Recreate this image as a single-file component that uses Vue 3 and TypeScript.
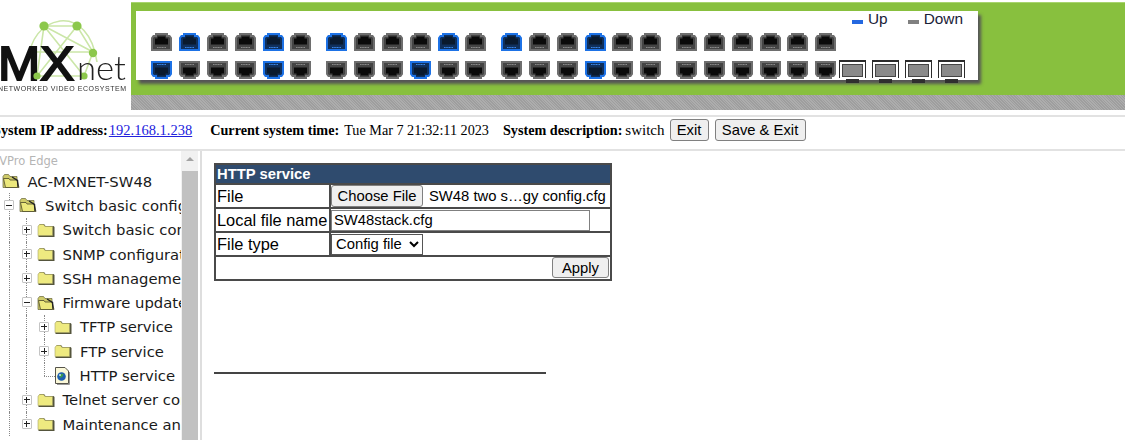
<script setup lang="ts">
type Cell = 'none' | 'line' | 'plus' | 'plus-end' | 'minus' | 'elbow'
type TreeRow = { label: string; cells: Cell[]; icon: 'open' | 'closed' | 'page' }

// which ports are up, by group
const topUp = [[1, 4], [0, 4], [0, 3], []]
const bottomUp = [[0, 4], [3], [3], []]

const groups = [0, 1, 2, 3].map((g) => ({
  top: [0, 1, 2, 3, 4, 5].map((i) => topUp[g].includes(i)),
  bottom: [0, 1, 2, 3, 4, 5].map((i) => bottomUp[g].includes(i)),
}))

const rows: TreeRow[] = [
  { label: 'AC-MXNET-SW48', cells: [], icon: 'open' },
  { label: 'Switch basic configuration', cells: ['minus'], icon: 'open' },
  { label: 'Switch basic config', cells: ['line', 'plus'], icon: 'closed' },
  { label: 'SNMP configuration', cells: ['line', 'plus'], icon: 'closed' },
  { label: 'SSH management', cells: ['line', 'plus'], icon: 'closed' },
  { label: 'Firmware update', cells: ['line', 'minus'], icon: 'open' },
  { label: 'TFTP service', cells: ['line', 'line', 'plus'], icon: 'closed' },
  { label: 'FTP service', cells: ['line', 'line', 'plus'], icon: 'closed' },
  { label: 'HTTP service', cells: ['line', 'line', 'elbow'], icon: 'page' },
  { label: 'Telnet server config', cells: ['line', 'plus'], icon: 'closed' },
  { label: 'Maintenance and', cells: ['line', 'plus-end'], icon: 'closed' },
]
</script>

<template>
  <div class="page">
    <header class="head">
      <div class="logo">
        <svg width="131" height="100" viewBox="0 0 131 100">
          <g stroke="#cbe6a8" stroke-width="1.6" fill="none">
            <path d="M28 62C30 38 42 24 60 21C78 19 93 34 97 62" />
            <path d="M44 26L77 26L93 52L84 76L37 76L44 26L93 52M77 26L37 76M44 26L84 76M28 52L93 52" />
          </g>
          <g fill="#8cc84b">
            <circle cx="44" cy="26" r="4.6" />
            <circle cx="77" cy="26" r="4.6" />
            <circle cx="93" cy="53" r="4.2" />
          </g>
          <text x="-2" y="80" class="logo-mx" textLength="76" lengthAdjust="spacingAndGlyphs">MX</text>
          <g fill="#8cc84b">
            <circle cx="37" cy="76" r="3.6" />
            <circle cx="84" cy="76" r="3.6" />
          </g>
          <text x="77" y="80" class="logo-net" textLength="49" lengthAdjust="spacingAndGlyphs">net</text>
          <text x="-2" y="91" class="logo-sub" textLength="128">NETWORKED VIDEO ECOSYSTEM</text>
        </svg>
      </div>
      <div class="banner">
        <div class="green">
          <div class="panel">
            <div class="legend">
              <span class="swatch up"></span><span class="legend-up">Up</span>
              <span class="swatch down"></span><span>Down</span>
            </div>
            <div class="port-row">
              <div v-for="(g, gi) in groups" :key="gi" class="port-group">
                <svg v-for="(up, i) in g.top" :key="i" class="port" :class="{ on: up }" viewBox="0 0 21 18">
                  <path class="rim" d="M5 1H16V3H18.5L20 5V17H1V5L2.5 3H5Z" />
                  <path class="well" d="M6.5 3.500H14.500V5.500H17V11.500H4V5.500H6.500Z" />
                  <path class="pins" d="M6 14.500H15" />
                </svg>
              </div>
            </div>
            <div class="port-row second">
              <div v-for="(g, gi) in groups" :key="gi" class="port-group">
                <svg v-for="(up, i) in g.bottom" :key="i" class="port flip" :class="{ on: up }" viewBox="0 0 21 18">
                  <path class="rim" d="M5 1H16V3H18.5L20 5V17H1V5L2.5 3H5Z" />
                  <path class="well" d="M6.5 3.500H14.500V5.500H17V11.500H4V5.500H6.500Z" />
                  <path class="pins" d="M6 14.500H15" />
                </svg>
              </div>
              <div class="sfp-group">
                <div v-for="n in 4" :key="n" class="sfp">
                  <span class="sfp-face"></span>
                  <span class="sfp-tab"></span>
                </div>
              </div>
            </div>
          </div>
        </div>
        <div class="hatch"></div>
      </div>
    </header>

    <div class="info">
      <b>System IP address:</b><a class="ip" href="#">192.168.1.238</a>
      <b class="gap-a">Current system time:</b><span class="val">Tue Mar 7 21:32:11 2023</span>
      <b class="gap-b">System description:</b><span class="val desc">switch</span>
      <button class="btn exit">Exit</button>
      <button class="btn save">Save &amp; Exit</button>
    </div>

    <main class="main">
      <aside class="side">
        <nav class="tree">
          <div class="tree-title">AVPro Edge</div>
          <div v-for="row in rows" :key="row.label" class="tree-row">
            <span v-for="(c, ci) in row.cells" :key="ci" class="cell" :class="c">
              <span v-if="c === 'plus' || c === 'plus-end' || c === 'minus'" class="box"></span>
            </span>
            <svg v-if="row.icon === 'closed'" class="ico" width="18" height="16" viewBox="0 0 18 16">
              <path d="M1.500 4L3 2H7L8.500 4H16.500L17.500 5V15H1.500Z" fill="#55553c" />
              <path d="M1 4.500L2.500 2.500H6.500L8 4.500H15.500V13.500H1Z" fill="#eeea80" stroke="#a8a566" stroke-width=".6" />
            </svg>
            <svg v-else-if="row.icon === 'open'" class="ico" width="18" height="16" viewBox="0 0 18 16">
              <path d="M1 3.500L2.500 1.500H6.500L8 3.500H15V14.500H1Z" fill="#cfcb6a" stroke="#66643a" stroke-width=".7" />
              <path d="M1.500 5.500H7L8 7H15L17 14.500H3.500Z" fill="#ece87c" stroke="#4a4828" stroke-width=".8" />
              <path d="M10 4L15.500 7.500L16 14" fill="none" stroke="#222" stroke-width="1.400" />
            </svg>
            <svg v-else class="ico page-ico" width="16" height="19" viewBox="0 0 16 19">
              <path d="M1.500 1.500H11L14.500 5V17.500H1.500Z" fill="#fbf8d8" stroke="#55534a" />
              <path d="M3 18.500H15.500V6" fill="none" stroke="#999" />
              <circle cx="7.500" cy="10.500" r="4.300" fill="#1f5fb0" />
              <path d="M5 9.500Q7 7 9.500 8L8.500 10.500L6.500 12Z" fill="#3d9b4a" />
              <circle cx="6" cy="9" r="1" fill="#c6e4f4" />
            </svg>
            <span class="tree-label">{{ row.label }}</span>
          </div>
        </nav>
        <div class="scroll">
          <div class="arrow"></div>
          <div class="thumb"></div>
        </div>
      </aside>

      <section class="content">
        <div class="form">
          <div class="title">HTTP service</div>
          <div class="lab">File</div>
          <div class="val-cell file-cell">
            <button class="btn choose">Choose File</button>
            <span class="file-name">SW48 two s…gy config.cfg</span>
          </div>
          <div class="lab">Local file name</div>
          <div class="val-cell">
            <input class="name-input" value="SW48stack.cfg" />
          </div>
          <div class="lab">File type</div>
          <div class="val-cell">
            <select class="type-select">
              <option>Config file</option>
            </select>
          </div>
          <div class="foot">
            <button class="btn apply">Apply</button>
          </div>
        </div>
        <hr class="rule" />
      </section>
    </main>
  </div>
</template>

<style scoped>
.page {
  width: 1125px;
  height: 440px;
  overflow: hidden;
  background: #fff;
  font-family: "Liberation Sans", Arial, sans-serif;
  color: #000;
}

.head {
  display: flex;
  height: 110px;
}

.logo {
  width: 131px;
  flex: none;
  overflow: hidden;
  filter: blur(0.35px);
}

.logo svg {
  display: block;
}

.logo-mx {
  font-family: "Liberation Sans", sans-serif;
  font-size: 49px;
  fill: #111;
  stroke: #111;
  stroke-width: 2px;
}

.logo-net {
  font-family: "Lato", sans-serif;
  font-weight: 300;
  font-size: 33px;
  fill: #222;
}

.logo-sub {
  font-family: "Liberation Sans", sans-serif;
  font-size: 7px;
  fill: #333;
}

.banner {
  flex: 1;
  margin-top: 2px;
  display: flex;
  flex-direction: column;
}

.green {
  height: 93px;
  background: #88c03e;
  border-top: 1px solid #a8d46e;
  padding: 8px 0 0 5px;
  box-sizing: border-box;
}

.hatch {
  height: 15px;
  background: repeating-linear-gradient(45deg, #9e9e9e 0 1px, #adadad 1px 2px);
}

.panel {
  width: 842px;
  height: 69px;
  background: #fff;
  box-shadow: 3px 4px 3px #555;
  padding-left: 15px;
  box-sizing: border-box;
}

.legend {
  height: 22px;
  display: flex;
  align-items: flex-start;
  justify-content: flex-end;
  padding-right: 15px;
  font-size: 15.400px;
  line-height: 15px;
  color: #1a2238;
}

.swatch {
  width: 11px;
  height: 4px;
  margin: 9px 5px 0 0;
}

.swatch.up {
  background: #2468e0;
}

.swatch.down {
  background: #808080;
}

.legend-up {
  margin-right: 20px;
}

.port-row {
  display: flex;
  gap: 14.500px;
  height: 18px;
}

.port-row.second {
  margin-top: 10px;
}

.port-group {
  display: flex;
  gap: 6.900px;
}

.port {
  width: 21px;
  height: 18px;
  flex: none;
  filter: blur(0.3px);
}

.port.flip {
  transform: scaleY(-1);
}

.rim {
  fill: #444;
  stroke: #6e6e6e;
  stroke-width: 2;
}

.well {
  fill: #0a0a0a;
}

.pins {
  stroke: #8a8a8a;
  stroke-width: 1.200;
  stroke-dasharray: 1.200 .4;
}

.port.on .rim {
  fill: #10305c;
  stroke: #1d72e6;
}

.port.on .well {
  fill: #0a1a2e;
}

.port.on .pins {
  stroke: #3a86e8;
}

.sfp-group {
  display: flex;
  gap: 6px;
  margin-left: -12px;
  margin-top: -1px;
}

.sfp {
  position: relative;
  width: 27px;
  height: 18px;
  box-sizing: border-box;
  padding: 2px;
  background: #fff;
  border: 1px solid #2b2b2b;
  border-top-width: 2px;
  border-bottom: 0;
  filter: blur(0.3px);
}

.sfp-face {
  display: block;
  height: 11px;
  background: #8a8a8a;
  border: 1px solid #444;
}

.sfp-tab {
  position: absolute;
  left: 6px;
  right: 6px;
  top: 16px;
  height: 4px;
  background: #2f2f2f;
  border-top: 1px solid #fff;
}

.info {
  margin: 5px 0 0 -7px;
  width: 1132px;
  box-sizing: border-box;
  height: 36px;
  padding-bottom: 6px;
  border-top: 2px solid #e2e2e2;
  border-bottom: 2px solid #e2e2e2;
  display: flex;
  align-items: center;
  font-family: "Liberation Serif", "Times New Roman", serif;
  font-size: 14.200px;
  white-space: pre;
}

.ip {
  color: #2222dd;
  text-decoration: underline;
  margin-left: 1px;
  font-size: 14.500px;
}

.gap-a {
  margin-left: 18px;
}

.gap-b {
  margin-left: 14px;
}

.val {
  margin-left: 5px;
}

.desc {
  margin-left: 3px;
  font-size: 15px;
}

.btn {
  font-family: "Liberation Sans", Arial, sans-serif;
  font-size: 14.800px;
  padding: 0;
  background: #efefef;
  border: 1px solid #808080;
  border-radius: 3px;
  color: #000;
}

.exit {
  width: 39px;
  height: 22px;
  margin-left: 5px;
}

.save {
  width: 91px;
  height: 22px;
  margin-left: 6px;
}

.main {
  display: flex;
  height: 289px;
}

.side {
  width: 200px;
  flex: none;
  display: flex;
  border-right: 2px solid #dedede;
}

.tree {
  width: 181px;
  overflow: hidden;
  font-family: "DejaVu Sans", Verdana, sans-serif;
  font-size: 14.800px;
  white-space: nowrap;
  color: #1a1a1a;
}

.tree-title {
  height: 15px;
  padding-top: 3px;
  margin-left: -8px;
  font-size: 11.500px;
  line-height: 15px;
  color: #b5b5b5;
}

.tree-row {
  display: flex;
  align-items: center;
  height: 24.300px;
}

.cell {
  position: relative;
  width: 17.500px;
  height: 100%;
  flex: none;
}

.cell::before {
  content: "";
  position: absolute;
  left: 8.500px;
  top: 0;
  bottom: 0;
  border-left: 1px dotted #888;
}

.cell.plus-end::before,
.cell.elbow::before {
  bottom: 50%;
}

.cell.elbow::after {
  content: "";
  position: absolute;
  left: 8.500px;
  right: -2px;
  top: 50%;
  border-top: 1px dotted #888;
}

.box {
  position: absolute;
  left: 4px;
  top: 7px;
  width: 10px;
  height: 10px;
  box-sizing: border-box;
  border: 1px solid #c4c4c4;
  border-radius: 1px;
  background:
    linear-gradient(#222, #222) center / 6px 1px no-repeat,
    #fff;
}

.plus .box,
.plus-end .box {
  background:
    linear-gradient(#222, #222) center / 6px 1px no-repeat,
    linear-gradient(#222, #222) center / 1px 6px no-repeat,
    #fff;
}

.ico {
  flex: none;
  margin: 0 8px 0 1.500px;
}

.page-ico {
  margin: 0 10px 0 1px;
}

.scroll {
  width: 17px;
  background: #f1f1f1;
  flex: none;
  display: flex;
  flex-direction: column;
}

.arrow {
  height: 20px;
  position: relative;
}

.arrow::before {
  content: "";
  position: absolute;
  left: 5px;
  top: 6px;
  border-left: 4px solid transparent;
  border-right: 4px solid transparent;
  border-bottom: 4px solid #a3a3a3;
}

.thumb {
  flex: 1;
  margin-left: 1px;
  background: #c1c1c1;
}

.content {
  padding: 12px 0 0 12px;
}

.form {
  width: 398px;
  box-sizing: border-box;
  display: grid;
  grid-template-columns: 113px 1fr;
  gap: 2px;
  padding: 2px;
  background: #4a4a4a;
  font-size: 16.400px;
  line-height: 18px;
}

.title {
  grid-column: 1 / 3;
  height: 18px;
  padding-left: 1px;
  background: #2f4b6e;
  color: #fff;
  font-weight: 700;
  font-size: 14.800px;
}

.lab {
  height: 22px;
  background: #fff;
  padding-left: 1px;
  line-height: 22px;
}

.val-cell {
  height: 22px;
  background: #fff;
  display: flex;
  align-items: center;
}

.choose {
  width: 92px;
  height: 22px;
  flex: none;
}

.file-name {
  margin-left: 6px;
  font-size: 14.800px;
  white-space: nowrap;
}

.name-input {
  width: 259px;
  height: 21px;
  box-sizing: border-box;
  padding: 0 2px;
  border: 1px solid #808080;
  font-family: "Liberation Sans", Arial, sans-serif;
  font-size: 14.800px;
  color: #000;
  outline: none;
}

.type-select {
  width: 92px;
  height: 21px;
  box-sizing: border-box;
  font-family: "Liberation Sans", Arial, sans-serif;
  font-size: 14.800px;
  background: #fff;
  border: 1px solid #555;
  border-radius: 0;
  color: #000;
}

.foot {
  grid-column: 1 / 3;
  height: 22px;
  background: #fff;
  display: flex;
  justify-content: flex-end;
  padding-right: 1px;
}

.apply {
  width: 57px;
  height: 21px;
}

.rule {
  width: 332px;
  height: 2px;
  margin: 91px 0 0;
  border: 0;
  background: #444;
}
</style>

<style>
html, body {
  margin: 0;
  background: #fff;
  overflow: hidden;
}
</style>
